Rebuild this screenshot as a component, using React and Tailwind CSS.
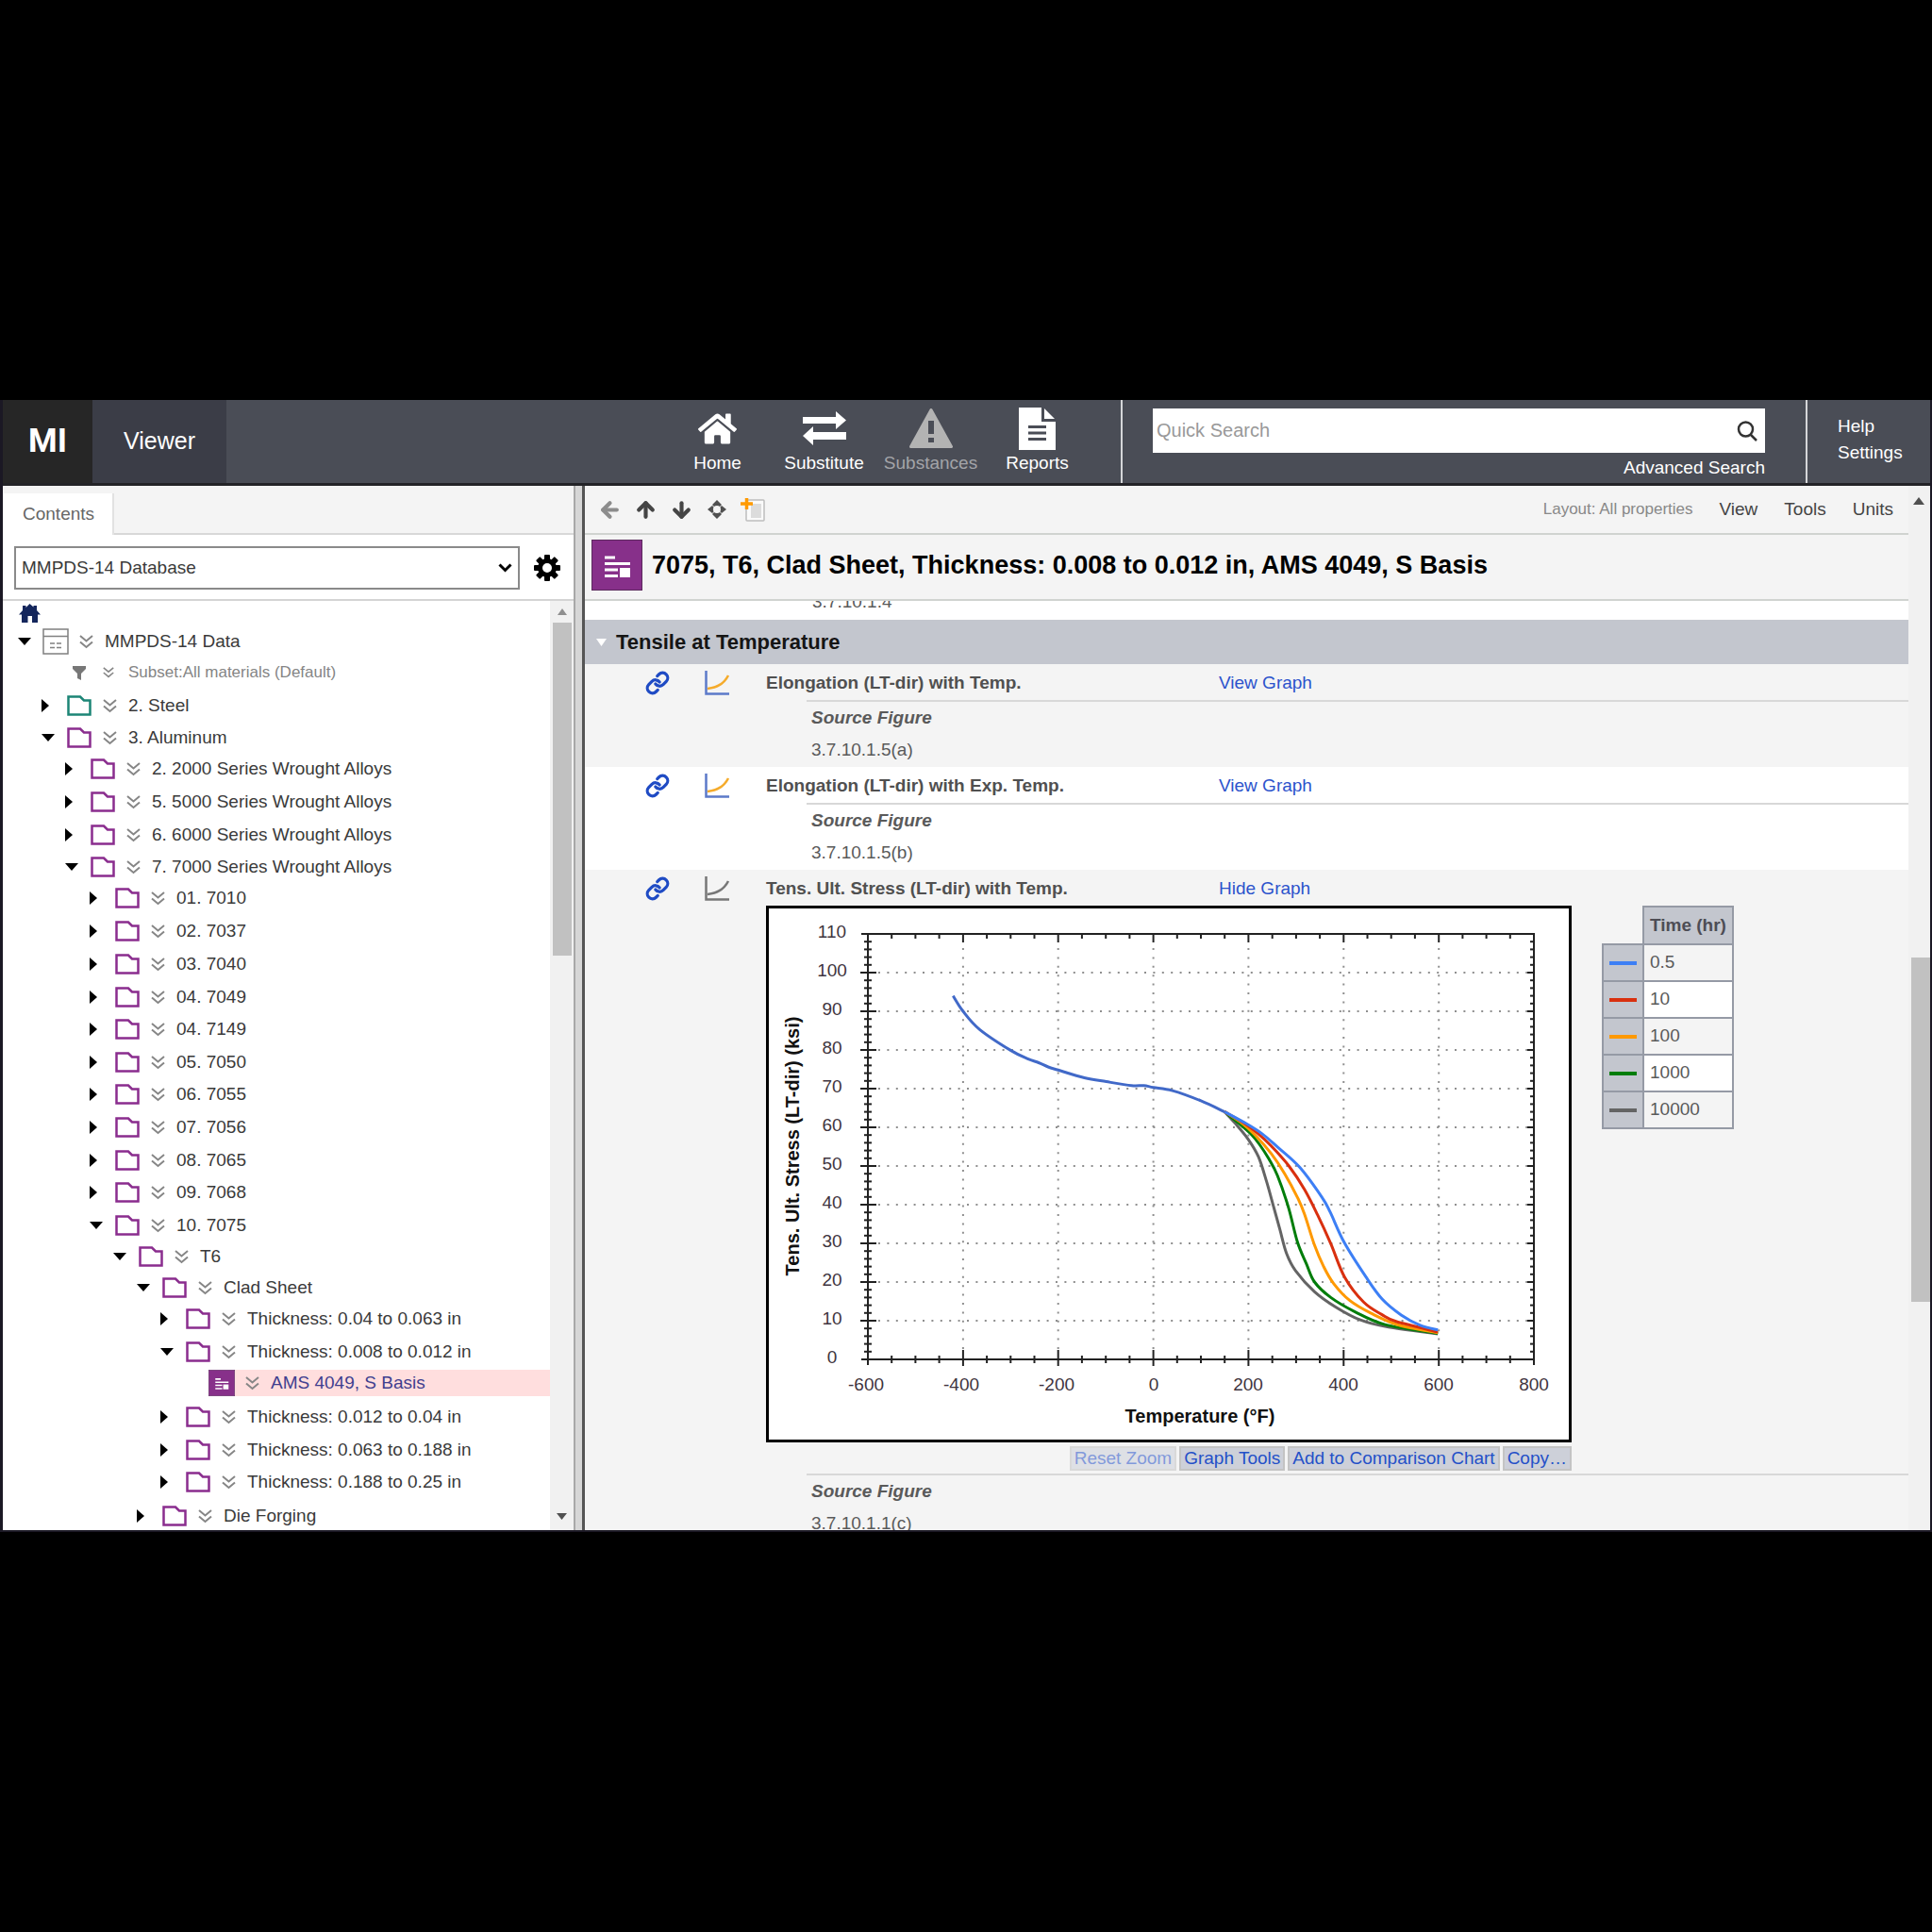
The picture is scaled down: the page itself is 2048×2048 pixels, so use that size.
import React from "react";
import { FaHome, FaFilter } from "react-icons/fa";
import { Link, ArrowLeft, ArrowUp, ArrowDown } from "lucide-react";

const ROW_HEIGHT = {
  33: "h-[33px]",
  34: "h-[34px]",
  35: "h-[35px]",
  36: "h-[36px]",
};

const TREE = [
  { level: 0, label: "MMPDS-14 Data", open: true, kind: "table", h: 33 },
  { level: 1, label: "Subset:All materials (Default)", kind: "filter", h: 35 },
  { level: 1, label: "2. Steel", color: "#1c8576", h: 34 },
  { level: 1, label: "3. Aluminum", open: true, h: 33 },
  { level: 2, label: "2. 2000 Series Wrought Alloys", h: 35 },
  { level: 2, label: "5. 5000 Series Wrought Alloys", h: 35 },
  { level: 2, label: "6. 6000 Series Wrought Alloys", h: 34 },
  { level: 2, label: "7. 7000 Series Wrought Alloys", open: true, h: 33 },
  { level: 3, label: "01. 7010", h: 35 },
  { level: 3, label: "02. 7037", h: 35 },
  { level: 3, label: "03. 7040", h: 35 },
  { level: 3, label: "04. 7049", h: 34 },
  { level: 3, label: "04. 7149", h: 35 },
  { level: 3, label: "05. 7050", h: 34 },
  { level: 3, label: "06. 7055", h: 35 },
  { level: 3, label: "07. 7056", h: 35 },
  { level: 3, label: "08. 7065", h: 34 },
  { level: 3, label: "09. 7068", h: 35 },
  { level: 3, label: "10. 7075", open: true, h: 33 },
  { level: 4, label: "T6", open: true, h: 33 },
  { level: 5, label: "Clad Sheet", open: true, h: 33 },
  { level: 6, label: "Thickness: 0.04 to 0.063 in", h: 35 },
  { level: 6, label: "Thickness: 0.008 to 0.012 in", open: true, h: 33 },
  { level: 7, label: "AMS 4049, S Basis", kind: "record", h: 36 },
  { level: 6, label: "Thickness: 0.012 to 0.04 in", h: 35 },
  { level: 6, label: "Thickness: 0.063 to 0.188 in", h: 34 },
  { level: 6, label: "Thickness: 0.188 to 0.25 in", h: 36 },
  { level: 5, label: "Die Forging", h: 34 },
];

const COMMON = [
  [-421, 94], [-400, 90], [-365, 85.3], [-300, 79.9], [-264, 77.7], [-241, 76.7],
  [-221, 75.6], [-200, 74.8], [-145, 72.8], [-99, 71.8], [-46, 70.8], [-20, 70.8],
  [0, 70.3], [40, 69.5], [99, 66.9], [150, 64],
];

const SERIES = [
  {
    time: "10000", color: "#646464",
    points: [[171, 61.2], [199, 57], [221, 52.4], [238, 46], [252, 39.8], [266, 33.6], [280, 27.4], [299, 22.9], [339, 17.5], [384, 13.5], [435, 10.2], [492, 8.4], [598, 6.6]],
  },
  {
    time: "1000", color: "#007d0a",
    points: [[180, 61], [205, 58.3], [223, 55.6], [243, 51.8], [261, 47.5], [284, 39.3], [303, 30.3], [322, 24.6], [339, 20], [373, 16], [424, 12.3], [487, 9], [598, 6.7]],
  },
  {
    time: "100", color: "#ff9900",
    points: [[185, 61.2], [214, 58], [248, 53.2], [276, 48], [304, 41.6], [318, 37.5], [339, 29.5], [358, 24], [379, 19.6], [413, 15.2], [458, 11.9], [515, 8.9], [598, 6.9]],
  },
  {
    time: "10", color: "#d9300f",
    points: [[192, 61], [220, 58.4], [247, 55.3], [285, 50], [318, 43.9], [345, 37.4], [373, 29.9], [402, 21.3], [442, 14.8], [480, 11.6], [510, 9.8], [598, 7.1]],
  },
  {
    time: "0.5", color: "#3d7ff5",
    points: [[192, 61.2], [228, 58.4], [261, 54.9], [308, 49.6], [355, 41.8], [372, 38], [401, 30.3], [447, 21.3], [481, 15.6], [521, 11.5], [561, 8.8], [598, 7.6]],
  },
];

const px = (t) => Math.round((105 + (t + 600) * 0.5043) * 10) / 10;
const py = (v) => Math.round((478 - v * 4.1) * 10) / 10;

// Catmull-Rom spline through the data points.
const curve = (data) => {
  const p = data.map(([t, v]) => [px(t), py(v)]);
  let d = `M${p[0]}`;
  for (let i = 0; i < p.length - 1; i++) {
    const [a, b, c, e] = [p[i - 1] || p[i], p[i], p[i + 1], p[i + 2] || p[i + 1]];
    d += `C${b[0] + (c[0] - a[0]) / 6},${b[1] + (c[1] - a[1]) / 6} ${c[0] - (e[0] - b[0]) / 6},${c[1] - (e[1] - b[1]) / 6} ${c}`;
  }
  return d;
};

const range = (from, to, step) => {
  const out = [];
  for (let n = from; n <= to; n += step) out.push(n);
  return out;
};

function Toggle({ open, label }) {
  return (
    <button type="button" aria-label={`Toggle ${label}`} className="flex w-[26px] shrink-0 items-center">
      {open ? (
        <svg width="14" height="8" viewBox="0 0 14 8"><path d="M0 0h14L7 8z" fill="#000" /></svg>
      ) : (
        <svg width="8" height="14" viewBox="0 0 8 14"><path d="M0 0l8 7-8 7z" fill="#000" /></svg>
      )}
    </button>
  );
}

function DoubleChevron({ size = 15 }) {
  return (
    <svg width={size} height={size} viewBox="0 0 15 15" fill="none" stroke="#868686" strokeWidth="2">
      <path d="M1 1l6.500 5.500L14 1M1 7.500l6.500 5.500L14 7.500" />
    </svg>
  );
}

function RecordMark({ size }) {
  return (
    <svg width={size} height={size} viewBox="0 0 54 54">
      <rect x="0.500" y="0.500" width="53" height="53" fill="#87308a" stroke="#5c2a5e" />
      <path d="M14 19h11M14 25.500h27M14 32h14M14 38.500h14" stroke="#fff" strokeWidth="3" />
      <rect x="30" y="30" width="11" height="10" fill="#fff" />
    </svg>
  );
}

function TreeIcon({ kind, color = "#8a2d8e" }) {
  if (kind === "table")
    return (
      <svg width="28" height="28" viewBox="0 0 28 28" fill="none" stroke="#808080" strokeWidth="1.500">
        <path d="M1 1h26v26H1zM1 8.500h26M8 16h5M15 16h5M8 20.500h5M15 20.500h5" />
      </svg>
    );
  if (kind === "filter")
    return (
      <svg width="14" height="15" viewBox="0 0 14 15" fill="#777"><path d="M0 0h14v3L9 8v7l-4-2V8L0 3z" /></svg>
    );
  if (kind === "record") return <RecordMark size={28} />;
  return (
    <svg width="26" height="22" viewBox="0 0 26 22" fill="none" stroke={color} strokeWidth="2.500">
      <path d="M1.500 1.500H14l4 4h6.500v15h-23z" />
    </svg>
  );
}

function TreeRow({ node }) {
  const { level, label, open, kind, color, h } = node;
  const leaf = kind === "filter" || kind === "record";
  const record = kind === "record";
  return (
    <li className={ROW_HEIGHT[h]}>
      <div className="flex h-[34px] items-center" style={{ paddingLeft: Math.round(16 + level * 25.2) }}>
        {leaf ? <span className="w-[26px] shrink-0" /> : <Toggle open={open} label={label} />}
        <span className="flex w-7 shrink-0 justify-center"><TreeIcon kind={kind} color={color} /></span>
        <div className={record ? "flex h-7 flex-1 items-center bg-[#ffdede] pl-[11px]" : "flex flex-1 items-center pl-[11px]"}>
          <span className="flex w-[27px] shrink-0"><DoubleChevron size={kind === "filter" ? 12 : 15} /></span>
          <a
            href="#record"
            className={
              record ? "text-[19px] whitespace-nowrap text-[#3f3f8f]"
              : kind === "filter" ? "text-[17px] whitespace-nowrap text-[#858585]"
              : "text-[19px] whitespace-nowrap text-[#3a3a3a]"
            }
          >
            {label}
          </a>
        </div>
      </div>
    </li>
  );
}

function Header() {
  const item = "flex w-[113px] flex-col items-center text-[19px] leading-6";
  const art = "flex h-[50px] items-center";
  return (
    <header className="flex h-[91px] shrink-0 border-b-[3px] border-[#232327] bg-[#4a4d56] text-white">
      <div className="flex w-[95px] items-center justify-center bg-[#262626] font-[Roboto] text-[35px] font-bold">MI</div>
      <div className="flex w-[142px] items-center justify-center bg-[#3b3d47] text-[25px]">Viewer</div>
      <div className="flex-1" />
      <nav className="flex pt-[5px]">
        <a href="#home" className={item}>
          <span className={art}><FaHome size={41} /></span>Home
        </a>
        <a href="#substitute" className={item}>
          <span className={art}>
            <svg width="46" height="36" viewBox="0 0 46 36" fill="#fff">
              <path d="M0 6h35V0l11 9.500L35 19v-6H0z" />
              <path d="M46 22H11v-6L0 26l11 10v-6h35z" />
            </svg>
          </span>
          Substitute
        </a>
        <a href="#substances" className={item + " text-[#a3a4a8]"}>
          <span className={art}>
            <svg width="46" height="42" viewBox="0 0 46 42">
              <path d="M23 1.500L44.500 40.500h-43z" fill="#b3b3b3" stroke="#b3b3b3" strokeWidth="3" strokeLinejoin="round" />
              <path d="M20 13h6v14h-6zM20 31h6v5h-6z" fill="#4a4d56" />
            </svg>
          </span>
          Substances
        </a>
        <a href="#reports" className={item}>
          <span className={art}>
            <svg width="39" height="45" viewBox="0 0 39 45">
              <path d="M0 0h24v15h15v30H0z" fill="#fff" />
              <path d="M27 1l11 11H27z" fill="#fff" />
              <path d="M10 20.500h19M10 27h19M10 33.500h19" stroke="#4a4d56" strokeWidth="3" />
            </svg>
          </span>
          Reports
        </a>
      </nav>
      <div className="ml-8 flex w-[728px] flex-col border-x-2 border-[#d5d6d9] pt-[9px] pr-[43px] pl-8">
        <label className="flex h-[47px] items-center bg-white pr-2 pl-1">
          <input
            type="text"
            aria-label="Quick Search"
            placeholder="Quick Search"
            className="h-full min-w-0 flex-1 text-[20px] text-[#333] outline-none placeholder:text-[#999]"
          />
          <svg width="22" height="22" viewBox="0 0 22 22" fill="none" stroke="#333" strokeWidth="2.500">
            <circle cx="9.500" cy="9" r="7.500" />
            <path d="M14.500 14.500L21 21" />
          </svg>
        </label>
        <a href="#advanced" className="mt-1 self-end text-[19px] leading-6">Advanced Search</a>
      </div>
      <div className="flex w-[130px] flex-col pt-3.5 pl-8 text-[19px] leading-7">
        <a href="#help">Help</a>
        <a href="#settings">Settings</a>
      </div>
    </header>
  );
}

function Gear() {
  return (
    <svg width="28" height="28" viewBox="-14 -14 28 28">
      {range(0, 315, 45).map((a) => (
        <rect key={a} x="-3" y="-14" width="6" height="8" rx="1" transform={`rotate(${a})`} />
      ))}
      <circle r="7.500" fill="none" stroke="#000" strokeWidth="5" />
    </svg>
  );
}

function Sidebar() {
  return (
    <aside className="flex w-[605px] shrink-0 flex-col bg-white">
      <div className="flex h-[52px] shrink-0 bg-[#f4f4f4]">
        <button type="button" className="mt-2 w-[118px] border-r-2 border-[#e2e2e2] bg-white pr-3 pl-[21px] text-left text-[19px] text-[#666]">
          Contents
        </button>
        <div className="flex-1 border-b-2 border-[#d8d8d8]" />
      </div>
      <div className="flex h-[70px] shrink-0 items-center gap-[15px] border-b-2 border-[#d4d4d4] pt-0.5 pr-3.5 pl-3">
        <div className="relative flex-1">
          <select aria-label="Database" className="h-[46px] w-full appearance-none border-2 border-[#8a8a8a] bg-white pl-1.5 text-[19px] text-[#3a3a3a]">
            <option>MMPDS-14 Database</option>
          </select>
          <svg className="pointer-events-none absolute top-[18px] right-2" width="15" height="10" viewBox="0 0 15 10" fill="none" stroke="#000" strokeWidth="3">
            <path d="M1.500 1.500l6 6 6-6" />
          </svg>
        </div>
        <button type="button" aria-label="Database settings"><Gear /></button>
      </div>
      <div className="flex min-h-0 flex-1">
        <div className="min-w-0 flex-1 overflow-hidden">
          <a href="#root" aria-label="Tree home" className="flex h-[26px] items-center pl-[17px]">
            <svg width="23" height="20" viewBox="0 0 23 20" fill="#14265c">
              <path d="M4 2h3.500v2L11.500 0l4 3.500V2H19v5l4 4.500h-3V20h-6v-7H9.500v7H3v-8.500H0L4 7z" />
            </svg>
          </a>
          <ul>
            {TREE.map((node) => <TreeRow key={node.label} node={node} />)}
          </ul>
        </div>
        <div className="flex w-[25px] flex-col items-center bg-[#f1f1f1]">
          <svg className="my-2" width="10" height="7" viewBox="0 0 10 7"><path d="M0 7l5-7 5 7z" fill="#8f8f8f" /></svg>
          <div className="h-[353px] w-5 bg-[#c1c1c1]" />
          <div className="flex-1" />
          <svg className="mb-[11px]" width="11" height="7" viewBox="0 0 11 7"><path d="M0 0h11L5.500 7z" fill="#505050" /></svg>
        </div>
      </div>
    </aside>
  );
}

function Toolbar() {
  return (
    <div className="flex h-[52px] shrink-0 items-center border-b-2 border-[#d0d3d0] pr-4 pl-3.5">
      <div className="flex items-center gap-[13px]">
        <button type="button" aria-label="Back"><ArrowLeft size={25} strokeWidth={4} color="#8c8c8c" /></button>
        <button type="button" aria-label="Previous"><ArrowUp size={25} strokeWidth={4} color="#454545" /></button>
        <button type="button" aria-label="Next"><ArrowDown size={25} strokeWidth={4} color="#454545" /></button>
        <button type="button" aria-label="Locate in tree">
          <svg width="24" height="20" viewBox="0 0 24 20" fill="#505050">
            <path d="M12 0l5 5-2 2h-6L7 5zM12 20l5-5-2-2h-6l-2 2zM2 10l5-4 2 2v4l-2 2zM22 10l-5-4-2 2v4l2 2z" />
            <circle cx="12" cy="10" r="4" fill="#f4f4f4" />
          </svg>
        </button>
        <button type="button" aria-label="Add to record list">
          <svg width="26" height="26" viewBox="0 0 26 26">
            <rect x="6" y="3" width="19" height="22" rx="1" fill="#fafafa" stroke="#bdbdbd" strokeWidth="1.500" />
            <rect x="11" y="7" width="11" height="15" fill="#dcdcdc" />
            <path d="M6.500 1v12M0 7h13" stroke="#ff9a00" strokeWidth="3.500" />
          </svg>
        </button>
      </div>
      <div className="flex-1" />
      <div className="flex items-center gap-7 text-[19px] text-[#444]">
        <span className="text-[17px] text-[#888]">Layout: All properties</span>
        <button type="button">View</button>
        <button type="button">Tools</button>
        <button type="button">Units</button>
      </div>
    </div>
  );
}

function PropertyLine({ name, action, active }) {
  const axis = active ? "#777" : "#5c7ac9";
  return (
    <div className="flex h-[38px] items-center pt-0.5">
      <a href="#link" aria-label={`Link to ${name}`} className="w-[63px] shrink-0">
        <Link size={26} strokeWidth={3} color="#1f4bc4" />
      </a>
      <svg className="w-[65px] shrink-0" height="26" viewBox="0 0 65 26" fill="none" strokeWidth="2.500">
        <path d="M1.500 0v24.500H26" stroke={axis} />
        <path d="M3 19C14 18 21 13 25 5" stroke={active ? "#777" : "#f5ab2b"} />
      </svg>
      <span className="w-[480px] shrink-0 text-[19px] font-bold text-[#505050]">{name}</span>
      <a href="#graph" className="text-[19px] text-[#2c53cc]">{action}</a>
    </div>
  );
}

function Source({ value }) {
  return (
    <div className="ml-[171px] border-t-2 border-[#d8d8d8] pl-[5px] text-[19px] leading-[34px] text-[#5a5a5a]">
      <div className="font-bold italic">Source Figure</div>
      <div>{value}</div>
    </div>
  );
}

function Chart() {
  return (
    <svg className="block w-full" viewBox="0 0 848 563" fontFamily="Liberation Sans, Arial, sans-serif">
      <g stroke="#8f8f8f" strokeWidth="2" strokeDasharray="2 7.400">
        {range(10, 100, 10).map((v) => <line key={v} x1="116" x2="806" y1={py(v)} y2={py(v)} />)}
        {range(-400, 600, 200).map((t) => <line key={t} x1={px(t)} x2={px(t)} y1="42" y2="470" />)}
      </g>
      <g stroke="#222" strokeWidth="2">
        <path d="M98 27H811V484M98 478H811M105 27V484" fill="none" />
        {range(2, 108, 2).map((v) => (
          <React.Fragment key={v}>
            <line x1={v % 10 ? 101 : 97} x2={v % 10 ? 109 : 114} y1={py(v)} y2={py(v)} />
            <line x1={v % 10 ? 807 : 804} x2="811" y1={py(v)} y2={py(v)} />
          </React.Fragment>
        ))}
        {range(-550, 750, 50).map((t) => (
          <React.Fragment key={t}>
            <line x1={px(t)} x2={px(t)} y1="27" y2={t % 200 ? 32 : 36} />
            <line x1={px(t)} x2={px(t)} y1={t % 200 ? 474 : 468} y2={t % 200 ? 482 : 485} />
          </React.Fragment>
        ))}
      </g>
      <g fill="none" strokeWidth="3" strokeLinejoin="round">
        {SERIES.map((s) => <path key={s.time} d={curve([COMMON[COMMON.length - 1], ...s.points])} stroke={s.color} />)}
        <path d={curve(COMMON)} stroke="#4169c8" />
      </g>
      <g fontSize="19" fill="#3f3540" textAnchor="middle">
        {range(0, 110, 10).map((v) => <text key={v} x="67" y={Math.round(py(v)) + 4}>{v}</text>)}
        {range(-600, 800, 200).map((t) => <text key={t} x={Math.round(px(t)) - (t < 0 ? 2 : 0)} y="511">{t}</text>)}
      </g>
      <g fontSize="20" fontWeight="bold" fill="#111" textAnchor="middle">
        <text x="457" y="545">Temperature (°F)</text>
        <text transform="translate(32 252) rotate(-90)">Tens. Ult. Stress (LT-dir) (ksi)</text>
      </g>
    </svg>
  );
}

function Legend() {
  const rows = [...SERIES].reverse();
  return (
    <table className="border-collapse self-start text-left text-[19px] text-[#5a5a5a]">
      <thead>
        <tr className="h-10">
          <td className="w-[43px]" />
          <th scope="col" className="border-2 border-[#959aa5] bg-[#c3c6ce] px-1.5 font-bold whitespace-nowrap text-[#4d4d55]">Time (hr)</th>
        </tr>
      </thead>
      <tbody>
        {rows.map((s) => (
          <tr key={s.time} className="h-[39px] odd:bg-[#f4f4f4] even:bg-white">
            <td className="border-2 border-[#959aa5] bg-[#c3c6ce] px-1.5">
              <svg width="29" height="4" className="block"><rect width="29" height="4" fill={s.color} /></svg>
            </td>
            <td className="border-2 border-[#959aa5] px-1.5">{s.time}</td>
          </tr>
        ))}
      </tbody>
    </table>
  );
}

function GraphPanel() {
  const btn = "h-[26px] border-2 border-[#c4c4c4] bg-[#cdd0d9] px-[3px] text-[19px] leading-[22px] whitespace-nowrap text-[#2450c8]";
  return (
    <div className="ml-[128px] flex gap-8">
      <div className="w-[854px] shrink-0">
        <div className="border-[3px] border-black bg-white"><Chart /></div>
        <div className="mt-1 mb-[3px] flex justify-end gap-[3px]">
          <button type="button" disabled className={btn + " opacity-55"}>Reset Zoom</button>
          <button type="button" className={btn}>Graph Tools</button>
          <button type="button" className={btn}>Add to Comparison Chart</button>
          <button type="button" className={btn}>Copy…</button>
        </div>
      </div>
      <Legend />
    </div>
  );
}

function Datasheet() {
  return (
    <div className="min-h-0 flex-1 overflow-hidden bg-white">
      <div className="-mt-4 h-9 pl-[241px] text-[19px] leading-[34px] text-[#5a5a5a]">3.7.10.1.4</div>
      <h2 className="flex h-[47px] items-center gap-2.5 bg-[#c3c6ce] pl-3 text-[22px] font-bold text-[#151515]">
        <svg width="11" height="8" viewBox="0 0 11 8"><path d="M0 0h11L5.500 8z" fill="#fff" /></svg>
        Tensile at Temperature
      </h2>
      <section className="h-[109px] bg-[#f4f4f4] pl-16">
        <PropertyLine name="Elongation (LT-dir) with Temp." action="View Graph" />
        <Source value="3.7.10.1.5(a)" />
      </section>
      <section className="h-[109px] bg-white pl-16">
        <PropertyLine name="Elongation (LT-dir) with Exp. Temp." action="View Graph" />
        <Source value="3.7.10.1.5(b)" />
      </section>
      <section className="bg-[#f4f4f4] pl-16">
        <PropertyLine name="Tens. Ult. Stress (LT-dir) with Temp." action="Hide Graph" active />
        <GraphPanel />
        <Source value="3.7.10.1.1(c)" />
      </section>
    </div>
  );
}

export default function App() {
  return (
    <div className="flex min-h-screen flex-col justify-center bg-black font-['Liberation_Sans',Arial,sans-serif]">
      <div className="flex aspect-[2048/1200] w-full flex-col overflow-hidden border-r-2 border-b-2 border-l-[3px] border-[#1b1824] bg-white">
        <Header />
        <div className="flex min-h-0 flex-1">
          <Sidebar />
          <div className="w-3 shrink-0 border-r-[3px] border-l-2 border-r-[#555] border-l-[#a8a8a8] bg-[#d6d6d6]" />
          <main className="flex min-w-0 flex-1 flex-col bg-[#f4f4f4]">
            <Toolbar />
            <div className="flex h-[70px] shrink-0 items-center gap-2.5 border-b-2 border-[#d0d3d0] pb-1 pl-[7px]">
              <RecordMark size={54} />
              <h1 className="text-[27px] font-bold whitespace-nowrap text-black">
                7075, T6, Clad Sheet, Thickness: 0.008 to 0.012 in, AMS 4049, S Basis
              </h1>
            </div>
            <Datasheet />
          </main>
          <div className="flex w-[23px] shrink-0 flex-col items-end bg-[#f1f1f1]">
            <svg className="mt-3 mr-1.5" width="12" height="8" viewBox="0 0 12 8"><path d="M0 8l6-8 6 8z" fill="#505050" /></svg>
            <div className="h-[480px]" />
            <div className="h-[365px] w-5 bg-[#c1c1c1]" />
          </div>
        </div>
      </div>
    </div>
  );
}
